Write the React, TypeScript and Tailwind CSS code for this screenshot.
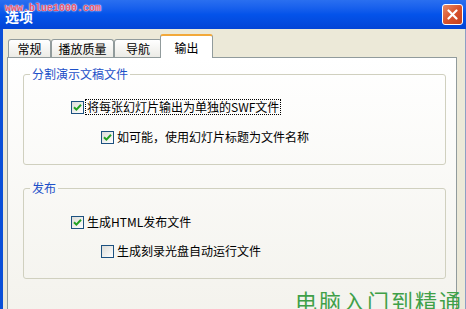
import React from "react";

const cjk = { fontFamily: '"Noto Sans CJK SC", "Liberation Sans", sans-serif' };

function Check({ checked }: { checked: boolean }) {
  return (
    <span className="flex h-[13px] w-[13px] shrink-0 items-center justify-center border border-[#1c5180] bg-gradient-to-br from-[#dcdcd7] to-white">
      {checked && (
        <svg width="9" height="9" viewBox="0 0 9 9">
          <path d="M1 4.2 L3.4 6.6 L8 1.8" fill="none" stroke="#21a121" strokeWidth="2" />
        </svg>
      )}
    </span>
  );
}

function Option({ checked, label, indent, focus }: { checked: boolean; label: string; indent: string; focus?: boolean }) {
  return (
    <div className={`flex h-[14px] items-center gap-[2px] ${indent}`}>
      <Check checked={checked} />
      <span className={`whitespace-nowrap px-[1px] text-[12px] leading-[14px] text-black ${focus ? "outline-1 outline-dotted outline-black" : ""}`}>
        {label}
      </span>
    </div>
  );
}

function Group({ title, children, className }: { title: string; children: React.ReactNode; className?: string }) {
  return (
    <fieldset className={`mx-0 ml-[15px] mr-[10px] h-[98px] rounded-[3px] border border-[#d0d0bf] px-0 ${className ?? ""}`}>
      <legend className="ml-[6px] px-[2px] text-[12px] leading-[14px] text-[#1d50c8]">{title}</legend>
      {children}
    </fieldset>
  );
}

export default function App() {
  const tabs = [
    { label: "常规", w: "w-[43px]" },
    { label: "播放质量", w: "w-[63px]" },
    { label: "导航", w: "w-[48px]" },
  ];
  return (
    <div className="relative flex h-[309px] w-[466px] flex-col overflow-hidden bg-[#0a4fd8]" style={cjk}>
      {/* title bar */}
      <div className="relative flex h-[29px] shrink-0 items-center bg-gradient-to-b from-[#2a6ff0] via-[#0453ea] to-[#0344d6] pl-[5px]">
        <span className="pt-[4px] text-[14px] font-bold text-white">选项</span>
        <span
          className="absolute left-[5px] top-[1px] text-[10px] font-bold text-[#e4506c]"
          style={{ fontFamily: '"Liberation Mono", monospace', textShadow: "0 0 2px #fff, 0 0 1px #fff" }}
        >
          www.blue1000.com
        </span>
        <div className="ml-auto mr-[3px] flex h-[21px] w-[21px] items-center justify-center rounded-[3px] border border-white bg-gradient-to-br from-[#e88a64] via-[#d9522c] to-[#c24020]">
          <svg width="11" height="11" viewBox="0 0 11 11">
            <path d="M1.5 1.5 L9.5 9.5 M9.5 1.5 L1.5 9.5" stroke="#fff" strokeWidth="2.2" strokeLinecap="round" />
          </svg>
        </div>
      </div>

      {/* body */}
      <div className="ml-[3px] flex flex-1 flex-col border-r border-[#8d9fc4] bg-[#ece9d8] pt-[4px]">
        <div className="flex h-[24px] items-end pl-[5px]">
          {tabs.map((t) => (
            <div
              key={t.label}
              className={`flex h-[18px] items-center justify-center rounded-t-[3px] border border-b-0 border-[#919b9c] bg-gradient-to-b from-white to-[#ecebe6] text-[12px] text-black ${t.w}`}
            >
              {t.label}
            </div>
          ))}
          <div className="relative z-10 -mb-[1px] -ml-[2px] flex h-[24px] w-[53px] items-start justify-center rounded-t-[3px] border-x border-t-2 border-[#919b9c] border-t-[#f2a93b] bg-white pt-[3px] text-[12px] text-black">
            输出
          </div>
        </div>

        <div className="ml-[4px] mr-[8px] h-[270px] border border-[#919b9c] bg-gradient-to-b from-white to-[#f3f2ec] pt-[9px]">
          <Group title="分割演示文稿文件">
            <div className="flex flex-col gap-[16px] pt-[19px]">
              <Option checked label="将每张幻灯片输出为单独的SWF文件" indent="pl-[47px]" focus />
              <Option checked label="如可能，使用幻灯片标题为文件名称" indent="pl-[77px]" />
            </div>
          </Group>
          <Group title="发布" className="mt-[16px]">
            <div className="flex flex-col gap-[15px] pt-[20px]">
              <Option checked label="生成HTML发布文件" indent="pl-[47px]" />
              <Option checked={false} label="生成刻录光盘自动运行文件" indent="pl-[77px]" />
            </div>
          </Group>
        </div>
      </div>

      <span className="absolute left-[295px] top-[288px] whitespace-nowrap text-[22px] leading-[24px] tracking-[2px] text-[#3fa048]">
        电脑入门到精通
      </span>
    </div>
  );
}
